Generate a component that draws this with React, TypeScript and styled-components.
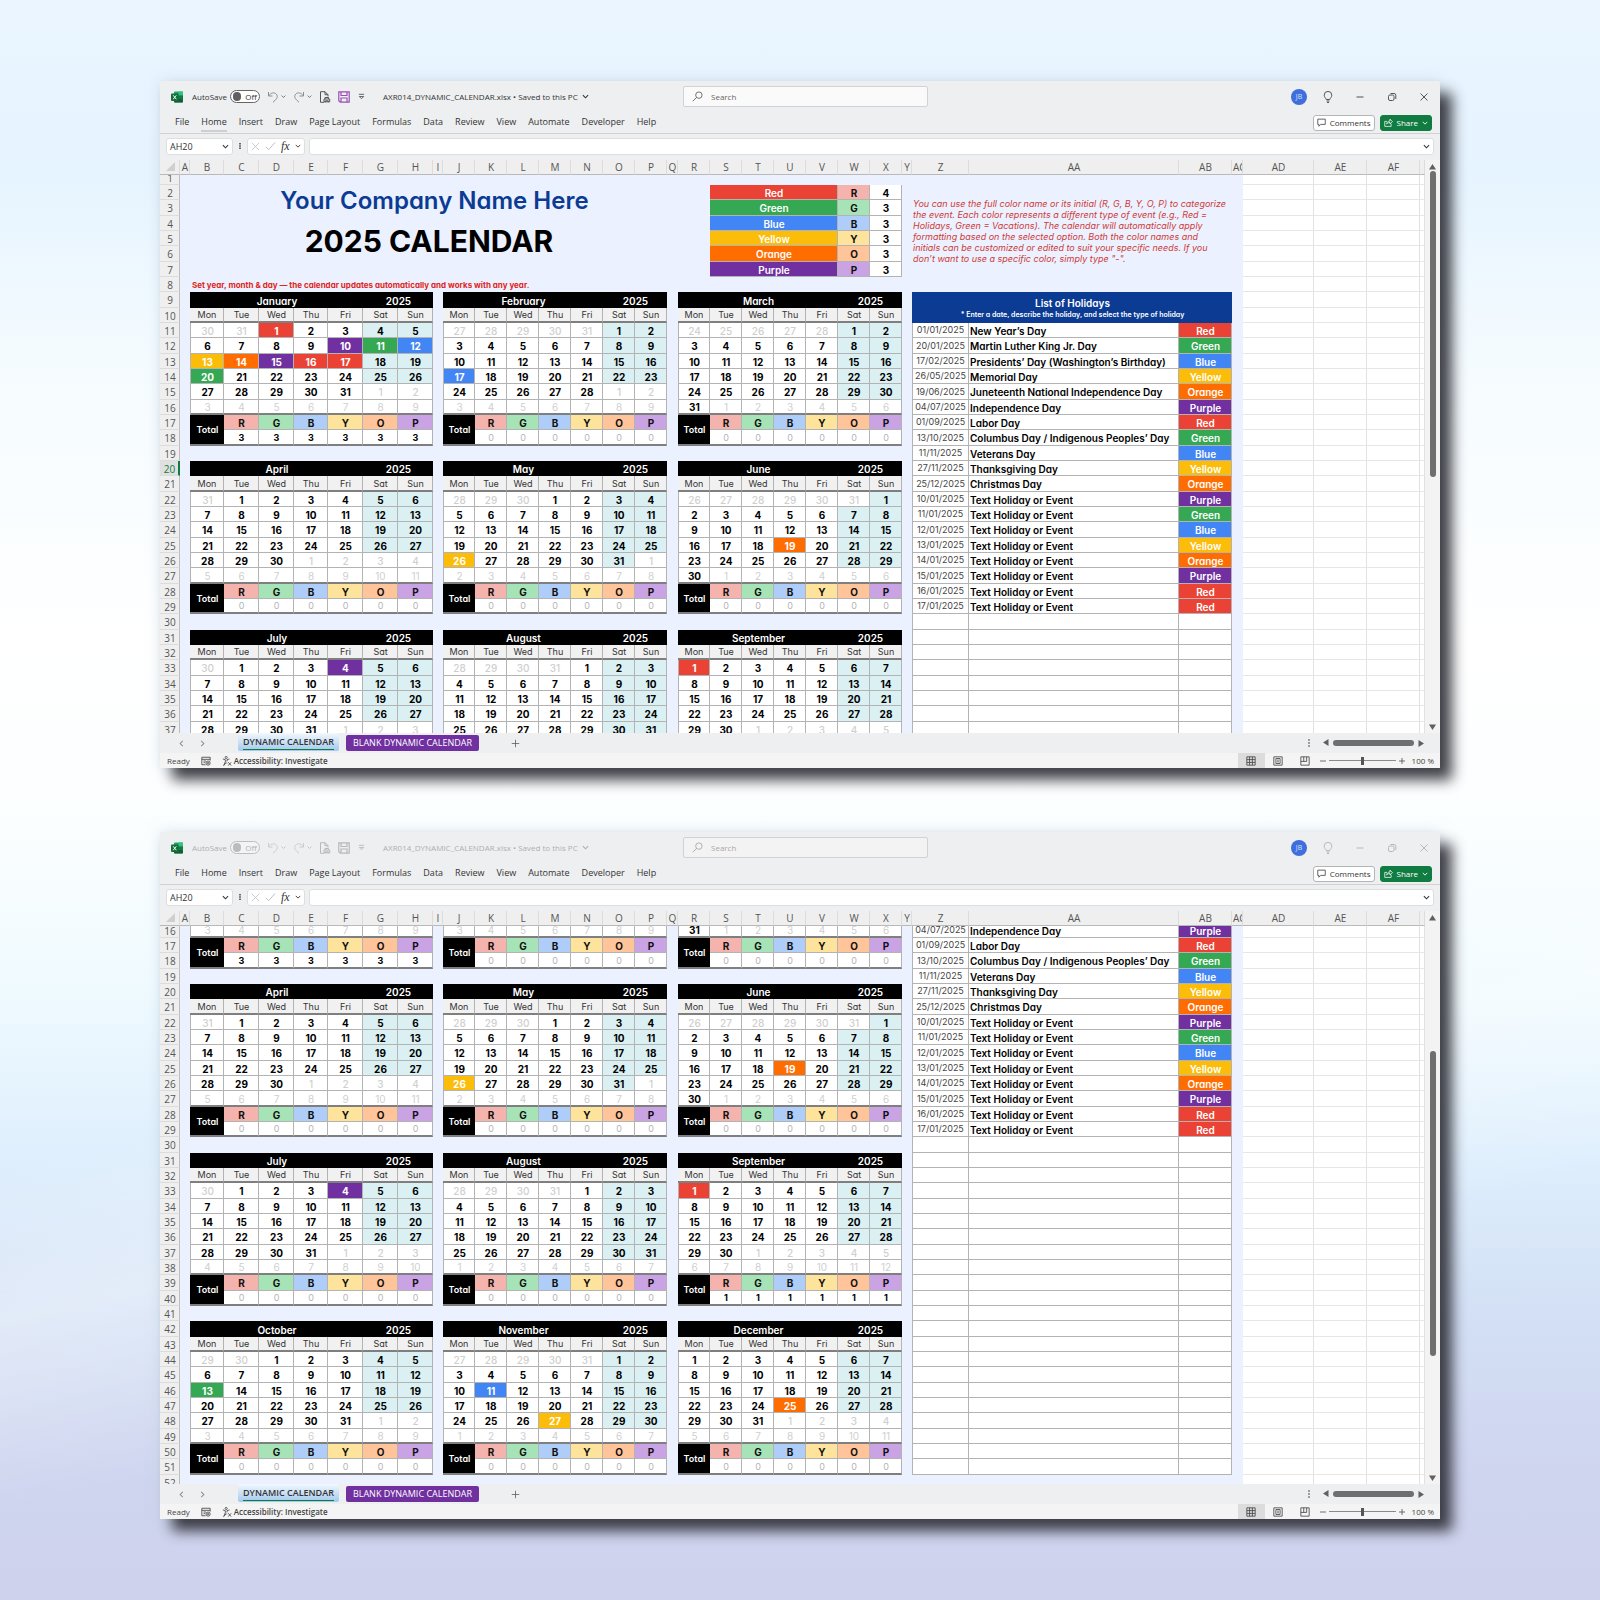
import React, { useId, useLayoutEffect, useRef } from 'react';
import styled, { createGlobalStyle, css } from 'styled-components';

const UI_FONT = '"Segoe UI", "Open Sans", "Noto Sans", sans-serif';
const SHEET_FONT = '"Century Gothic", Inter, "Open Sans", sans-serif';

const GlobalStyle = createGlobalStyle`
  * { box-sizing: border-box; }
  body { margin: 0; font-family: ${UI_FONT}; }
  button, input { font: inherit; color: inherit; margin: 0; padding: 0; border: 0; background: none; }
`;

/* ---------- Data ---------- */

type ColorName = 'Red' | 'Green' | 'Blue' | 'Yellow' | 'Orange' | 'Purple';

const COLORS: Record<ColorName, { solid: string; soft: string; count: number }> = {
  Red: { solid: '#ea4335', soft: '#f5b3ae', count: 4 },
  Green: { solid: '#34a853', soft: '#a6e3b6', count: 3 },
  Blue: { solid: '#4285f4', soft: '#aecdf8', count: 3 },
  Yellow: { solid: '#fbbc0a', soft: '#fee39c', count: 3 },
  Orange: { solid: '#ff6d01', soft: '#ffc499', count: 3 },
  Purple: { solid: '#7030a0', soft: '#c9a3e3', count: 3 },
};
const COLOR_NAMES = Object.keys(COLORS) as ColorName[];

const HOLIDAYS: [string, string, ColorName][] = [
  ['01/01/2025', 'New Year’s Day', 'Red'],
  ['20/01/2025', 'Martin Luther King Jr. Day', 'Green'],
  ['17/02/2025', 'Presidents’ Day (Washington’s Birthday)', 'Blue'],
  ['26/05/2025', 'Memorial Day', 'Yellow'],
  ['19/06/2025', 'Juneteenth National Independence Day', 'Orange'],
  ['04/07/2025', 'Independence Day', 'Purple'],
  ['01/09/2025', 'Labor Day', 'Red'],
  ['13/10/2025', 'Columbus Day / Indigenous Peoples’ Day', 'Green'],
  ['11/11/2025', 'Veterans Day', 'Blue'],
  ['27/11/2025', 'Thanksgiving Day', 'Yellow'],
  ['25/12/2025', 'Christmas Day', 'Orange'],
  ['10/01/2025', 'Text Holiday or Event', 'Purple'],
  ['11/01/2025', 'Text Holiday or Event', 'Green'],
  ['12/01/2025', 'Text Holiday or Event', 'Blue'],
  ['13/01/2025', 'Text Holiday or Event', 'Yellow'],
  ['14/01/2025', 'Text Holiday or Event', 'Orange'],
  ['15/01/2025', 'Text Holiday or Event', 'Purple'],
  ['16/01/2025', 'Text Holiday or Event', 'Red'],
  ['17/01/2025', 'Text Holiday or Event', 'Red'],
];

const YEAR = 2025;
const MONTHS = ['January', 'February', 'March', 'April', 'May', 'June', 'July', 'August', 'September', 'October', 'November', 'December'];
const WEEKDAYS = ['Mon', 'Tue', 'Wed', 'Thu', 'Fri', 'Sat', 'Sun'];
const TOTALS: Record<number, number> = { 0: 3, 8: 1 };
const MENU = ['File', 'Home', 'Insert', 'Draw', 'Page Layout', 'Formulas', 'Data', 'Review', 'View', 'Automate', 'Developer', 'Help'];

const COLUMNS: [string, number | undefined][] = [
  ['A', 10],
  ['B', 34], ['C', 35], ['D', 35], ['E', 34], ['F', 35], ['G', 35], ['H', 35],
  ['I', 10],
  ['J', 32], ['K', 32], ['L', 32], ['M', 32], ['N', 32], ['O', 32], ['P', 32],
  ['Q', 11],
  ['R', 32], ['S', 32], ['T', 32], ['U', 32], ['V', 32], ['W', 32], ['X', 32],
  ['Y', 10],
  ['Z', 57], ['AA', undefined], ['AB', 53],
  ['AC', 11],
  ['AD', 71], ['AE', 53], ['AF', 53], ['', 5],
];

const FIRST_BLOCK_ROW = 9;
const BLOCK_ROWS = 11;
const LAST_ROW = 52;

const pad = (n: number) => String(n).padStart(2, '0');
const highlightOf = (month: number, day: number) =>
  HOLIDAYS.find(([date]) => date === `${pad(day)}/${pad(month + 1)}/${YEAR}`)?.[2];

function dayAt(month: number, week: number, weekday: number) {
  const lead = (new Date(YEAR, month, 1).getDay() + 6) % 7;
  const date = new Date(YEAR, month, 1 - lead + week * 7 + weekday);
  return { day: date.getDate(), inside: date.getMonth() === month };
}

/* ---------- Page and window ---------- */

const Page = styled.main`
  display: flex;
  flex-direction: column;
  gap: 64px;
  min-height: 1600px;
  padding: 81px 10% 80px;
  background:
    linear-gradient(168deg, rgba(255, 255, 255, 0) 60%, rgba(255, 255, 255, 0.35) 68%, rgba(255, 255, 255, 0) 78%),
    linear-gradient(180deg, #eaf5ff 0%, #e6f4ff 11%, #f4fbff 22%, #ffffff 40%, #fbfeff 52%, #effaff 62%, #dfeffd 72%, #d3e0f5 82%, #cfd5ef 92%, #cfd2ed 100%);
`;

const Window = styled.section`
  display: flex;
  flex-direction: column;
  min-width: 1200px;
  background: #eeeff0;
  color: #333;
  border-radius: 2px;
  box-shadow: 12px 12px 14px rgba(35, 35, 42, 0.85), 0 0 14px rgba(190, 205, 220, 0.5);
`;

const TitleBar = styled.header`
  display: grid;
  grid-template-columns: 1fr 245px 1fr;
  align-items: center;
  height: 31px;
  padding-left: 11px;
  font-size: 8px;
`;

const Fade = styled.div<{ $dim: boolean; $gap: number }>`
  display: flex;
  align-items: center;
  gap: ${(p) => p.$gap}px;
  opacity: ${(p) => (p.$dim ? 0.35 : 1)};
`;

const TitleLeft = styled.div`
  display: flex;
  align-items: center;
  gap: 9px;
  white-space: nowrap;
`;

const TitleRight = styled.div`
  display: flex;
  align-items: center;
  justify-content: flex-end;
  gap: 15px;
  padding-right: 10px;
`;

const IconButton = styled.button`
  display: flex;
  align-items: center;
  justify-content: center;
  gap: 2px;
  min-width: 10px;
  height: 16px;
  color: #555;
`;

const AutoSave = styled.label`
  display: flex;
  align-items: center;
  gap: 3px;
`;

const Toggle = styled.span`
  display: flex;
  align-items: center;
  gap: 4px;
  width: 30px;
  height: 13px;
  padding: 0 2px;
  border: 1px solid #666;
  border-radius: 7px;
  background: #fff;
  line-height: 11px;

  input {
    appearance: none;
    width: 9px;
    height: 9px;
    border-radius: 5px;
    background: #5f5f64;
  }
`;

const FileName = styled.button`
  display: flex;
  align-items: center;
  gap: 4px;
  margin-left: 9px;
  white-space: nowrap;
`;

const SearchBox = styled.label<{ $dim: boolean }>`
  display: flex;
  align-items: center;
  gap: 8px;
  height: 21px;
  padding: 0 8px;
  border: 1px solid #d2d2d4;
  border-radius: 2px;
  background: ${(p) => (p.$dim ? '#f3f3f3' : '#fafafa')};
  color: ${(p) => (p.$dim ? '#aaa' : '#666')};

  input {
    flex: 1;
    width: 0;
    outline: 0;
  }
  input::placeholder { color: inherit; opacity: 1; }
`;

const Avatar = styled.span`
  display: grid;
  place-items: center;
  width: 16px;
  height: 16px;
  border-radius: 50%;
  background: #3f6fdc;
  color: #d5e1ff;
  font-size: 7px;
`;

const Ribbon = styled.nav`
  display: flex;
  align-items: center;
  gap: 12px;
  height: 22px;
  padding: 0 8px 0 15px;
  border-bottom: 1px solid #d0d1d3;
  font-size: 9px;
`;

const MenuItem = styled.button<{ $current: boolean }>`
  height: 18px;
  border-bottom: 2px solid ${(p) => (p.$current ? '#cfcfd1' : 'transparent')};
  line-height: 16px;
  white-space: nowrap;
`;

const RibbonActions = styled.div`
  display: flex;
  gap: 5px;
  margin-left: auto;
  font-size: 8px;
`;

const ActionButton = styled.button<{ $primary?: boolean }>`
  display: flex;
  align-items: center;
  gap: 4px;
  height: 16px;
  padding: 0 3px;
  border: 1px solid ${(p) => (p.$primary ? '#107c41' : '#b5b5b8')};
  border-radius: 3px;
  background: ${(p) => (p.$primary ? '#107c41' : '#fff')};
  color: ${(p) => (p.$primary ? '#fff' : '#333')};
  white-space: nowrap;
`;

const FormulaBar = styled.div`
  display: flex;
  align-items: center;
  gap: 4px;
  height: 26px;
  padding: 0 6px 2px;
  font-size: 9px;
`;

const WhiteBox = styled.div<{ $width?: number; $center?: boolean }>`
  display: flex;
  align-items: center;
  justify-content: ${(p) => (p.$center ? 'center' : 'space-between')};
  gap: ${(p) => (p.$center ? 5 : 6)}px;
  flex: ${(p) => (p.$width ? `0 0 ${p.$width}px` : 1)};
  height: 17px;
  padding: 0 3px;
  border: 1px solid #dededf;
  border-radius: 3px;
  background: #fff;

  input {
    flex: 1;
    width: 0;
    outline: 0;
  }
`;

const Fx = styled.i`
  font-family: "Liberation Serif", serif;
  font-size: 12px;
  line-height: 12px;
`;

/* ---------- Sheet ---------- */

const SheetArea = styled.div`
  display: flex;
  height: 573px;
`;

const Viewport = styled.div`
  flex: 1;
  min-width: 0;
  overflow: hidden;
`;

const Grid = styled.table`
  width: 100%;
  table-layout: fixed;
  border-collapse: separate;
  border-spacing: 0;
  background: #fff;
  font-family: ${SHEET_FONT};
  font-feature-settings: "cv11";
  font-size: 10px;
  line-height: 12px;

  th, td {
    padding: 1px 0 0 1px;
    overflow: hidden;
    text-align: center;
    white-space: nowrap;
  }
`;

const ColumnHead = styled.th`
  position: sticky;
  top: 0;
  z-index: 1;
  height: 15px;
  border-right: 1px solid #dcdcdc;
  border-bottom: 1px solid #b9b9b9;
  background: #efefef;
  color: #555;
  font: 400 10px/13px ${UI_FONT};
`;

const Row = styled.tr<{ $tall: boolean }>`
  height: ${(p) => (p.$tall ? 16 : 15)}px;
`;

const RowHead = styled.th<{ $active: boolean }>`
  border-right: ${(p) => (p.$active ? '2px solid #107c41' : '1px solid #bdbdbd')};
  border-bottom: 1px solid #dcdcdc;
  background: ${(p) => (p.$active ? '#e0e0e0' : '#efefef')};
  color: ${(p) => (p.$active ? '#107c41' : '#555')};
  font: 400 10px/12px ${UI_FONT};
`;

const Blank = styled.td`
  background: #ebf1fe;
`;

const PlainCell = styled.td`
  border-right: 1px solid #e1e1e1;
  border-bottom: 1px solid #e6e6e6;
`;

const CompanyName = styled.td`
  background: #ebf1fe;
  color: #0c3b94;
  font-size: 24px;
  font-weight: 600;
  line-height: 28px;
`;

const SheetTitle = styled.td`
  && { padding-top: 4px; }
  background: #ebf1fe;
  color: #000;
  font-size: 30px;
  font-weight: 700;
  line-height: 36px;
`;

const Hint = styled.td`
  background: #ebf1fe;
  && { text-align: left; padding-left: 2px; }
  color: #e0241b;
  font-size: 8px;
  font-weight: 700;
`;

const ColorNote = styled.td`
  background: #ebf1fe;
  && { text-align: left; white-space: normal; padding: 0 0 0 1px; }
  color: #cf3a38;
  font-size: 9px;
  font-style: italic;
  line-height: 11px;
`;

const boxed = css`
  border-right: 1px solid #b3b3b3;
  border-bottom: 1px solid #b3b3b3;
`;

const thickBottom = css`
  border-bottom: 2px solid #7f7f7f;
`;

const MonthName = styled.th`
  background: #000;
  color: #fff;
  font-weight: 600;
`;

const Weekday = styled.th`
  ${boxed}
  ${thickBottom}
  background: #f1f1f1;
  color: #333;
  font-size: 9px;
  font-weight: 400;
`;

const Day = styled.td<{ $inside: boolean; $weekend: boolean; $fill?: string; $last: boolean; $first: boolean }>`
  ${boxed}
  ${(p) => p.$first && css`border-left: 1px solid #b3b3b3;`}
  ${(p) => p.$last && thickBottom}
  background: ${(p) => p.$fill ?? (p.$weekend && p.$inside ? '#daf0f3' : '#fff')};
  color: ${(p) => (p.$fill ? '#fff' : p.$inside ? '#000' : '#cfcfcf')};
  font-weight: ${(p) => (p.$inside ? 700 : p.$last ? 400 : 500)};
`;

const TotalLabel = styled.th`
  ${thickBottom}
  background: #000;
  color: #fff;
  font-size: 9px;
  font-weight: 600;
`;

const Swatch = styled.td<{ $fill: string; $dark?: boolean }>`
  ${boxed}
  background: ${(p) => p.$fill};
  color: ${(p) => (p.$dark ? '#111' : '#fff')};
  font-weight: ${(p) => (p.$dark ? 700 : 600)};
`;

const Count = styled.td<{ $zero?: boolean; $thick?: boolean }>`
  ${boxed}
  ${(p) => p.$thick && thickBottom}
  background: #fff;
  color: ${(p) => (p.$zero ? '#b5b5b5' : '#000')};
  font-size: ${(p) => (p.$thick ? 9 : 10)}px;
  font-weight: ${(p) => (p.$zero ? 400 : 700)};
`;

const HolidayHead = styled.th`
  background: #0c3b94;
  color: #fff;
  font-weight: 600;

  small {
    display: block;
    font-size: 7px;
    line-height: 11px;
  }
`;

const HolidayDate = styled.td`
  ${boxed}
  border-left: 1px solid #b3b3b3;
  && { padding: 0; }
  color: #444;
  font-size: 9px;
`;

const HolidayName = styled.td`
  ${boxed}
  && { text-align: left; }
  color: #000;
  font-weight: 600;
`;

/* ---------- Scroll bars, sheet tabs, status bar ---------- */

const VerticalBar = styled.div`
  display: flex;
  flex-direction: column;
  align-items: center;
  width: 15px;
  padding: 3px 0 2px;
  background: #f3f3f3;
`;

const Flexible = styled.span<{ $grow: number; $thumb?: boolean }>`
  flex: ${(p) => p.$grow} 1 0;
  width: 6px;
  border-radius: 3px;
  background: ${(p) => (p.$thumb ? '#6f6f6f' : 'transparent')};
`;

const Arrow = styled.button<{ $turn?: number }>`
  display: grid;
  place-items: center;
  width: 8px;
  height: 8px;
  color: #606060;
  transform: rotate(${(p) => p.$turn ?? 0}deg);
`;

const TabBar = styled.footer`
  display: flex;
  align-items: center;
  height: 20px;
  padding: 0 15px 0 16px;
`;

const TabArrows = styled.div`
  display: flex;
  gap: 11px;
  width: 62px;

  button { color: #8c8c8c; }
`;

const SheetTab = styled.button<{ $current?: boolean }>`
  height: ${(p) => (p.$current ? 18 : 16)}px;
  align-self: ${(p) => (p.$current ? 'flex-start' : 'center')};
  margin-right: 7px;
  padding: 0 ${(p) => (p.$current ? 5 : 7)}px;
  border-radius: 2px;
  background: ${(p) => (p.$current ? 'linear-gradient(#f2f8fd, #a3c9ee)' : '#7030a0')};
  color: ${(p) => (p.$current ? '#333' : '#fff')};
  font-size: 9px;
  font-weight: ${(p) => (p.$current ? 600 : 400)};
  line-height: 14px;
  white-space: nowrap;

  span {
    display: block;
    border-bottom: ${(p) => (p.$current ? '1px solid #107c41' : '0')};
  }
`;

const AddSheet = styled(IconButton)`
  margin-left: 24px;
`;

const HorizontalBar = styled.div`
  display: flex;
  align-items: center;
  gap: 3px;
  margin-left: auto;
`;

const MoreTabs = styled(IconButton)`
  margin-right: 5px;
`;

const HorizontalThumb = styled.span`
  width: 81px;
  height: 6px;
  border-radius: 3px;
  background: #6f6f6f;
`;

const StatusBar = styled.footer`
  display: flex;
  align-items: center;
  gap: 11px;
  height: 15px;
  padding: 0 6px 0 7px;
  background: #f4f4f4;
  color: #444;
  font-size: 8px;
`;

const StatusItem = styled.span<{ $strong?: boolean }>`
  display: flex;
  align-items: center;
  gap: 2px;
  font-weight: ${(p) => (p.$strong ? 600 : 400)};
  white-space: nowrap;
`;

const ViewButtons = styled.div`
  display: flex;
  margin-left: auto;
`;

const ViewButton = styled.button<{ $on?: boolean }>`
  display: grid;
  place-items: center;
  width: 27px;
  height: 15px;
  background: ${(p) => (p.$on ? '#dcdcdc' : 'transparent')};
`;

const Zoom = styled.div`
  display: flex;
  align-items: center;
  gap: 3px;
  margin-left: -10px;

  input {
    appearance: none;
    width: 67px;
    height: 10px;
    background: linear-gradient(#8a8a8a, #8a8a8a) center / 100% 1px no-repeat;
  }
  input::-webkit-slider-thumb {
    appearance: none;
    width: 3px;
    height: 8px;
    background: #555;
  }
  output { margin-left: 4px; white-space: nowrap; }
`;

/* ---------- Icons ---------- */

type StrokeProps = { size?: number; width?: number; box?: number; color?: string; children: React.ReactNode };
const Stroke = ({ size = 12, width = 1, box = 12, color = 'currentColor', children }: StrokeProps) => (
  <svg width={size} height={size} viewBox={`0 0 ${box} ${box}`} fill="none" stroke={color} strokeWidth={width} aria-hidden="true">
    {children}
  </svg>
);

const Chevron = ({ size = 7, turn = 0 }: { size?: number; turn?: number }) => (
  <Stroke size={size} box={8} width={1.2}>
    <path d="M1 2.500 4 5.500 7 2.500" transform={`rotate(${turn} 4 4)`} />
  </Stroke>
);

const ExcelLogo = () => (
  <svg width="12" height="12" viewBox="0 0 12 12" aria-hidden="true">
    <rect x="3" y="0.5" width="9" height="11" rx="1" fill="#21a366" />
    <rect x="7.5" y="0.5" width="4.5" height="4" fill="#33c481" />
    <rect x="3" y="4.5" width="9" height="3.5" fill="#107c41" />
    <rect x="3" y="8" width="9" height="3.5" rx="1" fill="#185c37" />
    <rect x="0" y="2.5" width="7.5" height="7.5" rx="1" fill="#0f703b" />
    <path d="M2.2 4.3 5.3 8.2M5.3 4.3 2.2 8.2" stroke="#fff" strokeWidth="1" />
  </svg>
);

const UndoIcon = ({ flip = false }: { flip?: boolean }) => (
  <Stroke color="#8d8d8d">
    <path transform={flip ? 'matrix(-1 0 0 1 12 0)' : undefined} d="M1.500 1v4h4M1.700 4.800C3.500 2 7 .8 9.200 3c2 2.200.8 4.400-.6 5.800L6 11.300" />
  </Stroke>
);

const PreviewIcon = () => (
  <Stroke>
    <path d="M5 11.300H1.500V.7h4.500l3 3V5.500M6 .7v3h3" />
    <path d="M6 8V6.500h3.500V8M5 8h5.700v2.800H5zM6.300 11.300V9.800h3v1.500" />
  </Stroke>
);

const SaveIcon = ({ color }: { color: string }) => (
  <Stroke color={color} width={1.2}>
    <path d="M.8.8h10.400v10.400H2.300L.8 9.700zM3 .8v3.700h6V.8M3 11V7h6v4" />
  </Stroke>
);

const TriangleIcon = () => (
  <svg width="7" height="6" viewBox="0 0 7 6" aria-hidden="true">
    <path d="M3.500 0 7 5.500H0z" fill="currentColor" />
  </svg>
);

/* ---------- Sheet rows ---------- */

function LegendCells({ index }: { index: number }) {
  const name = COLOR_NAMES[index];
  return (
    <>
      <Swatch colSpan={4} $fill={COLORS[name].solid}>{name}</Swatch>
      <Swatch $fill={COLORS[name].soft} $dark>{name[0]}</Swatch>
      <Count>{COLORS[name].count}</Count>
    </>
  );
}

function BannerCells({ row }: { row: number }) {
  if (row === 1) return <Blank colSpan={23} />;
  if (row === 8) return <Hint colSpan={23}>Set year, month &amp; day — the calendar updates automatically and works with any year.</Hint>;
  return (
    <>
      {row === 2 && <CompanyName colSpan={16} rowSpan={2}>Your Company Name Here</CompanyName>}
      {row === 4 && <SheetTitle colSpan={15} rowSpan={3}>2025 CALENDAR</SheetTitle>}
      <Blank colSpan={row < 4 ? 1 : row < 7 ? 2 : 17} />
      <LegendCells index={row - 2} />
    </>
  );
}

function MonthCells({ month, line }: { month: number; line: number }) {
  const total = TOTALS[month] ?? 0;
  if (line === 0)
    return (
      <>
        <MonthName colSpan={5}>{MONTHS[month]}</MonthName>
        <MonthName colSpan={2}>{YEAR}</MonthName>
      </>
    );
  if (line === 1) return <>{WEEKDAYS.map((d) => <Weekday key={d}>{d}</Weekday>)}</>;
  if (line === 8)
    return (
      <>
        <TotalLabel rowSpan={2}>Total</TotalLabel>
        {COLOR_NAMES.map((c) => <Swatch key={c} $fill={COLORS[c].soft} $dark>{c[0]}</Swatch>)}
      </>
    );
  if (line === 9) return <>{COLOR_NAMES.map((c) => <Count key={c} $thick $zero={!total}>{total}</Count>)}</>;
  if (line === 10) return <Blank colSpan={7} />;
  return (
    <>
      {WEEKDAYS.map((name, i) => {
        const { day, inside } = dayAt(month, line - 2, i);
        const mark = inside ? highlightOf(month, day) : undefined;
        return (
          <Day key={name} $inside={inside} $weekend={i > 4} $first={i === 0} $last={line === 7} $fill={mark && COLORS[mark].solid}>
            {day}
          </Day>
        );
      })}
    </>
  );
}

function CalendarCells({ row }: { row: number }) {
  if (row < FIRST_BLOCK_ROW) return <BannerCells row={row} />;
  const block = Math.floor((row - FIRST_BLOCK_ROW) / BLOCK_ROWS);
  const line = (row - FIRST_BLOCK_ROW) % BLOCK_ROWS;
  return (
    <>
      <MonthCells month={block * 3} line={line} />
      <Blank />
      <MonthCells month={block * 3 + 1} line={line} />
      <Blank />
      <MonthCells month={block * 3 + 2} line={line} />
    </>
  );
}

function HolidayCells({ row }: { row: number }) {
  if (row === 1 || row === 8 || row === LAST_ROW) return <Blank colSpan={3} />;
  if (row === 2)
    return (
      <ColorNote colSpan={3} rowSpan={6}>
        You can use the full color name or its initial (R, G, B, Y, O, P) to categorize<br />
        the event. Each color represents a different type of event (e.g., Red =<br />
        Holidays, Green = Vacations). The calendar will automatically apply<br />
        formatting based on the selected option. Both the color names and<br />
        initials can be customized or edited to suit your specific needs. If you<br />
        don’t want to use a specific color, simply type "-".
      </ColorNote>
    );
  if (row === 9)
    return (
      <HolidayHead colSpan={3} rowSpan={2}>
        List of Holidays
        <small>* Enter a date, describe the holiday, and select the type of holiday</small>
      </HolidayHead>
    );
  if (row < 11) return null;
  const entry = HOLIDAYS[row - 11];
  return (
    <>
      <HolidayDate>{entry?.[0]}</HolidayDate>
      <HolidayName>{entry?.[1]}</HolidayName>
      {entry ? <Swatch $fill={COLORS[entry[2]].solid}>{entry[2]}</Swatch> : <HolidayName />}
    </>
  );
}

function Sheet({ scrollTop, activeRow }: { scrollTop: number; activeRow?: number }) {
  const viewport = useRef<HTMLDivElement>(null);
  useLayoutEffect(() => {
    if (viewport.current) viewport.current.scrollTop = scrollTop;
  }, [scrollTop]);

  return (
    <Viewport ref={viewport}>
      <Grid>
        <colgroup>
          <col width={20} />
          {COLUMNS.map(([name, width]) => <col key={name} width={width} />)}
        </colgroup>
        <thead>
          <tr>
            <ColumnHead>
              <svg width="9" height="9" viewBox="0 0 9 9" aria-hidden="true"><path d="M9 0v9H0z" fill="#cfcfcf" /></svg>
            </ColumnHead>
            {COLUMNS.map(([name]) => <ColumnHead key={name}>{name}</ColumnHead>)}
          </tr>
        </thead>
        <tbody>
          {Array.from({ length: LAST_ROW }, (_, i) => i + 1).map((row) => (
            <Row key={row} $tall={row % 3 === 0}>
              <RowHead $active={row === activeRow}>{row}</RowHead>
              <Blank />
              <CalendarCells row={row} />
              <Blank />
              <HolidayCells row={row} />
              <Blank />
              <PlainCell /><PlainCell /><PlainCell /><PlainCell />
            </Row>
          ))}
        </tbody>
      </Grid>
    </Viewport>
  );
}

/* ---------- Workbook window ---------- */

type WorkbookProps = { focused: boolean; scrollTop: number; activeRow?: number; track: [number, number, number] };

function Workbook({ focused, scrollTop, activeRow, track }: WorkbookProps) {
  const id = useId();
  const dim = !focused;
  return (
    <Window aria-label="AXR014_DYNAMIC_CALENDAR.xlsx">
      <TitleBar>
        <TitleLeft>
          <ExcelLogo />
          <Fade $dim={dim} $gap={7}>
            <AutoSave htmlFor={`${id}auto`}>
              AutoSave
              <Toggle><input id={`${id}auto`} type="checkbox" />Off</Toggle>
            </AutoSave>
            <IconButton aria-label="Undo"><UndoIcon /><Chevron size={5} /></IconButton>
            <IconButton aria-label="Redo"><UndoIcon flip /><Chevron size={5} /></IconButton>
            <IconButton aria-label="Print preview"><PreviewIcon /></IconButton>
            <IconButton aria-label="Save"><SaveIcon color={focused ? '#9a4fb5' : '#555'} /></IconButton>
            <IconButton aria-label="Customize toolbar">
              <Stroke size={7} box={8}><path d="M1 1.500h6M1.500 4 4 6.500 6.500 4z" /></Stroke>
            </IconButton>
            <FileName>AXR014_DYNAMIC_CALENDAR.xlsx • Saved to this PC <Chevron /></FileName>
          </Fade>
        </TitleLeft>
        <SearchBox $dim={dim} htmlFor={`${id}search`}>
          <Stroke size={11}><circle cx="7.500" cy="4.500" r="3.500" /><path d="M5 7 .8 11.200" /></Stroke>
          <input id={`${id}search`} type="search" placeholder="Search" aria-label="Search" />
        </SearchBox>
        <TitleRight>
          <Avatar>JB</Avatar>
          <Fade $dim={dim} $gap={20}>
            <IconButton aria-label="Tips">
              <Stroke><path d="M4.200 8.500C4 7 2.200 6.300 2.200 4.200a3.800 3.800 0 0 1 7.600 0C9.800 6.300 8 7 7.800 8.500zM4.500 10h3M5 11.500h2" /></Stroke>
            </IconButton>
            <IconButton aria-label="Minimize"><Stroke><path d="M2.500 6h7" /></Stroke></IconButton>
            <IconButton aria-label="Restore">
              <Stroke><rect x="2.500" y="4" width="5.500" height="5.500" rx="1.500" /><path d="M4.500 2.500H8A1.800 1.800 0 0 1 9.800 4.300V8" /></Stroke>
            </IconButton>
            <IconButton aria-label="Close"><Stroke><path d="m2.500 2.500 7 7M9.500 2.500l-7 7" /></Stroke></IconButton>
          </Fade>
        </TitleRight>
      </TitleBar>

      <Ribbon>
        {MENU.map((name) => <MenuItem key={name} $current={focused && name === 'Home'}>{name}</MenuItem>)}
        <RibbonActions>
          <ActionButton>
            <Stroke size={9}><path d="M1 1.500h10V8.500H5L2.500 11V8.500H1z" /></Stroke>
            Comments
          </ActionButton>
          <ActionButton $primary>
            <Stroke size={9}><path d="M4 4.500H1v6.700h8.500V8M3.500 8C4 5.500 5.500 4 8 4V1.500L11.300 5 8 8V6C6 6 5 6.500 3.500 8z" /></Stroke>
            Share
            <Chevron size={6} />
          </ActionButton>
        </RibbonActions>
      </Ribbon>

      <FormulaBar>
        <WhiteBox $width={67}>
          <input aria-label="Name box" defaultValue="AH20" />
          <Chevron />
        </WhiteBox>
        <Stroke size={6} box={6} width={1.4}><path d="M3 0v1.400M3 2.300v1.400M3 4.600V6" /></Stroke>
        <WhiteBox $width={57} $center>
          <Stroke size={9} color="#bbb"><path d="m1 1 10 10M11 1 1 11" /></Stroke>
          <Stroke size={11} color="#bbb"><path d="m1 6.500 3 3 7-8" /></Stroke>
          <Fx>fx</Fx>
          <Chevron size={6} />
        </WhiteBox>
        <WhiteBox>
          <input aria-label="Formula" />
          <Chevron />
        </WhiteBox>
      </FormulaBar>

      <SheetArea>
        <Sheet scrollTop={scrollTop} activeRow={activeRow} />
        <VerticalBar>
          <Arrow aria-label="Scroll up"><TriangleIcon /></Arrow>
          <Flexible $grow={track[0]} />
          <Flexible $grow={track[1]} $thumb />
          <Flexible $grow={track[2]} />
          <Arrow aria-label="Scroll down" $turn={180}><TriangleIcon /></Arrow>
        </VerticalBar>
      </SheetArea>

      <TabBar>
        <TabArrows>
          <IconButton aria-label="Previous sheet"><Chevron turn={90} /></IconButton>
          <IconButton aria-label="Next sheet"><Chevron turn={-90} /></IconButton>
        </TabArrows>
        <SheetTab $current><span>DYNAMIC CALENDAR</span></SheetTab>
        <SheetTab><span>BLANK DYNAMIC CALENDAR</span></SheetTab>
        <AddSheet aria-label="New sheet"><Stroke size={9}><path d="M6 1v10M1 6h10" /></Stroke></AddSheet>
        <HorizontalBar>
          <MoreTabs aria-label="More">
            <Stroke size={8} box={8} width={1.4}><path d="M4 .3v1.400M4 3.300v1.400M4 6.300v1.400" /></Stroke>
          </MoreTabs>
          <Arrow aria-label="Scroll left" $turn={-90}><TriangleIcon /></Arrow>
          <HorizontalThumb />
          <Arrow aria-label="Scroll right" $turn={90}><TriangleIcon /></Arrow>
        </HorizontalBar>
      </TabBar>

      <StatusBar>
        <StatusItem>Ready</StatusItem>
        <Stroke size={10}><path d="M1 1.500h10v4M1 1.500v9h4.500M1 4h10M3 6h3M3 8h2" /><circle cx="8.500" cy="8.500" r="2.500" /><circle cx="8.500" cy="8.500" r=".8" /></Stroke>
        <StatusItem $strong>
          <Stroke size={10}>
            <circle cx="5" cy="1.800" r="1.300" />
            <path d="M1 3.500 4 4.500V7L2 11.500 5 8l1 1M9 3.500 6 4.500V6.500M7.500 7.500l3.500 4M11 7.500l-3.500 4" />
          </Stroke>
          Accessibility: Investigate
        </StatusItem>
        <ViewButtons>
          <ViewButton aria-label="Normal view" $on>
            <Stroke size={10}><path d="M1 1h10v10H1zM1 4.300h10M1 7.700h10M4.300 1v10M7.700 1v10" /></Stroke>
          </ViewButton>
          <ViewButton aria-label="Page layout view">
            <Stroke size={10}><path d="M1 1h10v10H1zM3.500 3h5v6h-5zM5 5h2M5 7h2" /></Stroke>
          </ViewButton>
          <ViewButton aria-label="Page break view">
            <Stroke size={10}><path d="M1 1h10v10H1zM4.500 1v5.500M1 6.500h7V1" /></Stroke>
          </ViewButton>
        </ViewButtons>
        <Zoom>
          <Stroke size={6} box={8}><path d="M0 4h8" /></Stroke>
          <input id={`${id}zoom`} type="range" aria-label="Zoom" min={0} max={200} defaultValue={100} />
          <Stroke size={6} box={8}><path d="M0 4h8M4 0v8" /></Stroke>
          <output htmlFor={`${id}zoom`}>100 %</output>
        </Zoom>
      </StatusBar>
    </Window>
  );
}

export default function App() {
  return (
    <>
      <GlobalStyle />
      <Page>
        <Workbook focused scrollTop={5} activeRow={20} track={[0, 306, 246]} />
        <Workbook focused={false} scrollTop={233} track={[129, 305, 118]} />
      </Page>
    </>
  );
}
